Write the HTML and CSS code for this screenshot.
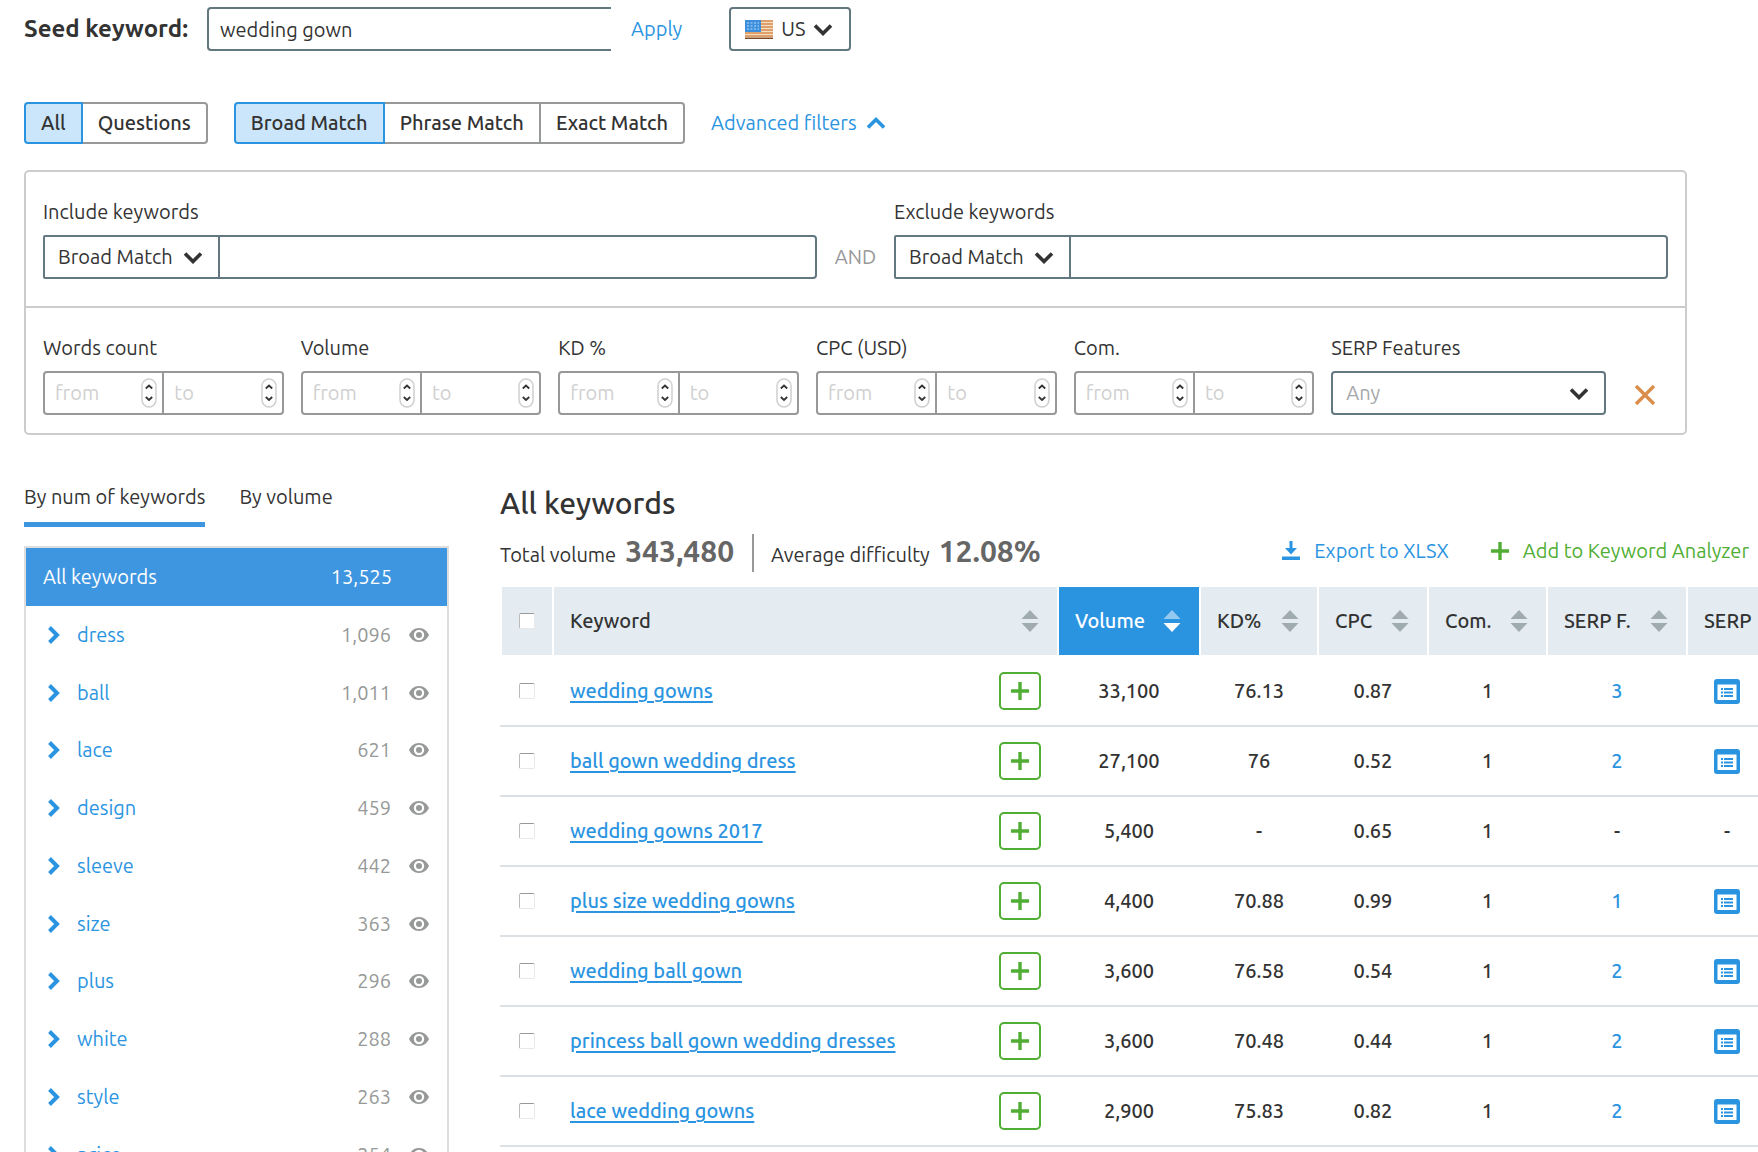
FILE: index.html
```html
<!DOCTYPE html>
<html lang="en">
<head>
<meta charset="utf-8">
<title>Keyword research</title>
<link rel="stylesheet" href="styles.css">
</head>
<body>
<svg class="sprite" aria-hidden="true">
  <symbol id="down" viewBox="0 0 20 14"><path d="M2 3.500l8 8 8-8" fill="none" stroke="currentColor" stroke-width="3.600"/></symbol>
  <symbol id="up" viewBox="0 0 20 14"><path d="M2 11.500l8-8 8 8" fill="none" stroke="currentColor" stroke-width="3.600"/></symbol>
  <symbol id="right" viewBox="0 0 12 18"><path d="M1.500 1.500L9 9l-7.500 7.500" fill="none" stroke="currentColor" stroke-width="4"/></symbol>
  <symbol id="eye" viewBox="0 0 20 14"><path fill="currentColor" fill-rule="evenodd" d="M10 0C5 0 2 3 0 7c2 4 5 7 10 7s8-3 10-7c-2-4-5-7-10-7zm0 1.800a5.200 5.200 0 1 1 0 10.400 5.200 5.200 0 0 1 0-10.400zM10 4a3 3 0 1 0 0 6 3 3 0 0 0 0-6z"/></symbol>
  <symbol id="spin" viewBox="0 0 16 30"><rect x="1" y="1" width="14" height="28" rx="7" fill="#fff" stroke="#d0d0d0" stroke-width="1.500"/><path d="M4.800 10.500L8 7.500l3.200 3M4.800 19L8 22l3.200-3" fill="none" stroke="#333" stroke-width="1.800"/></symbol>
  <symbol id="sort" viewBox="0 0 18 22"><path class="sort-up" d="M9 0l8.500 9H.5z"/><path d="M9 22l8.500-9H.5z"/></symbol>
  <symbol id="plus" viewBox="0 0 18 18"><path d="M9 0v18M0 9h18" fill="none" stroke="currentColor" stroke-width="3.400"/></symbol>
  <symbol id="cross" viewBox="0 0 22 22"><path d="M2 2l18 18M20 2L2 20" fill="none" stroke="currentColor" stroke-width="3.400"/></symbol>
  <symbol id="export" viewBox="0 0 18 20"><path fill="currentColor" d="M7.500 0h3v7H15l-6 6.500L3 7h4.500zM0 15.500h18V19H0z"/></symbol>
  <symbol id="serp" viewBox="0 0 26 25"><rect width="26" height="25" rx="3" fill="currentColor"/><path fill="#fff" d="M3.500 5.500h19V21h-19z"/><path fill="currentColor" d="M7 9h2v2H7zm3 0h9v2h-9zm-3 3.500h2v2H7zm3 0h9v2h-9zM7 16h2v2H7zm3 0h9v2h-9z"/></symbol>
</svg>

<div class="page">
  <form class="seed">
    <label class="seed-label" for="seed">Seed keyword:</label>
    <input class="seed-input" id="seed" type="text" value="wedding gown">
    <a class="apply" href="#">Apply</a>
    <div class="country">
      <svg class="flag" viewBox="0 0 28 19" aria-hidden="true">
        <rect width="28" height="19" fill="#f3dfc6"/>
        <path d="M0 1h28M0 4h28M0 7h28M0 10h28M0 13h28M0 16h28" stroke="#d98b4e" stroke-width="1.700"/>
        <path d="M0 18.300h28" stroke="#7c4a28" stroke-width="1.400"/>
        <rect width="16" height="12" fill="#3c8fdd"/>
        <path d="M2 3h12M2 6h12M2 9h12" stroke="#b9dbf8" stroke-width="1" stroke-dasharray="2 1.500"/>
      </svg>
      <select class="country-select" aria-label="Country"><option>US</option></select>
      <svg class="chevron"><use href="#down"/></svg>
    </div>
  </form>

  <div class="matches">
    <div class="group">
      <button class="seg active" type="button">All</button>
      <button class="seg" type="button">Questions</button>
    </div>
    <div class="group">
      <button class="seg active" type="button">Broad Match</button>
      <button class="seg" type="button">Phrase Match</button>
      <button class="seg" type="button">Exact Match</button>
    </div>
    <a class="advanced" href="#">Advanced filters <svg class="chevron"><use href="#up"/></svg></a>
  </div>

  <form class="filters">
    <div class="keywords-row">
      <div class="field">
        <label for="include">Include keywords</label>
        <div class="combo">
          <div class="combo-select"><select aria-label="Include match type"><option>Broad Match</option></select><svg class="chevron"><use href="#down"/></svg></div>
          <input class="combo-input" id="include" type="text">
        </div>
      </div>
      <span class="and">AND</span>
      <div class="field">
        <label for="exclude">Exclude keywords</label>
        <div class="combo">
          <div class="combo-select"><select aria-label="Exclude match type"><option>Broad Match</option></select><svg class="chevron"><use href="#down"/></svg></div>
          <input class="combo-input" id="exclude" type="text">
        </div>
      </div>
    </div>
    <div class="ranges-row">
      <div class="field"><label for="words">Words count</label>
        <div class="range"><div class="num"><input id="words" type="number" placeholder="from"><svg class="spin"><use href="#spin"/></svg></div><div class="num"><input type="number" placeholder="to" aria-label="Words count to"><svg class="spin"><use href="#spin"/></svg></div></div></div>
      <div class="field"><label for="volume">Volume</label>
        <div class="range"><div class="num"><input id="volume" type="number" placeholder="from"><svg class="spin"><use href="#spin"/></svg></div><div class="num"><input type="number" placeholder="to" aria-label="Volume to"><svg class="spin"><use href="#spin"/></svg></div></div></div>
      <div class="field"><label for="kd">KD %</label>
        <div class="range"><div class="num"><input id="kd" type="number" placeholder="from"><svg class="spin"><use href="#spin"/></svg></div><div class="num"><input type="number" placeholder="to" aria-label="KD % to"><svg class="spin"><use href="#spin"/></svg></div></div></div>
      <div class="field"><label for="cpc">CPC (USD)</label>
        <div class="range"><div class="num"><input id="cpc" type="number" placeholder="from"><svg class="spin"><use href="#spin"/></svg></div><div class="num"><input type="number" placeholder="to" aria-label="CPC to"><svg class="spin"><use href="#spin"/></svg></div></div></div>
      <div class="field"><label for="com">Com.</label>
        <div class="range"><div class="num"><input id="com" type="number" placeholder="from"><svg class="spin"><use href="#spin"/></svg></div><div class="num"><input type="number" placeholder="to" aria-label="Com. to"><svg class="spin"><use href="#spin"/></svg></div></div></div>
      <div class="field"><label for="serp-features">SERP Features</label>
        <div class="any"><select id="serp-features"><option>Any</option></select><svg class="chevron"><use href="#down"/></svg></div></div>
      <button class="clear" type="button" aria-label="Clear filters"><svg><use href="#cross"/></svg></button>
    </div>
  </form>

  <div class="columns">
    <aside class="side">
      <nav class="tabs">
        <a class="tab current" href="#">By num of keywords</a>
        <a class="tab" href="#">By volume</a>
      </nav>
      <ul class="groups">
        <li class="item all"><a href="#">All keywords</a><span class="count">13,525</span></li>
        <li class="item"><svg class="arrow"><use href="#right"/></svg><a href="#">dress</a><span class="count">1,096</span><svg class="eye"><use href="#eye"/></svg></li>
        <li class="item"><svg class="arrow"><use href="#right"/></svg><a href="#">ball</a><span class="count">1,011</span><svg class="eye"><use href="#eye"/></svg></li>
        <li class="item"><svg class="arrow"><use href="#right"/></svg><a href="#">lace</a><span class="count">621</span><svg class="eye"><use href="#eye"/></svg></li>
        <li class="item"><svg class="arrow"><use href="#right"/></svg><a href="#">design</a><span class="count">459</span><svg class="eye"><use href="#eye"/></svg></li>
        <li class="item"><svg class="arrow"><use href="#right"/></svg><a href="#">sleeve</a><span class="count">442</span><svg class="eye"><use href="#eye"/></svg></li>
        <li class="item"><svg class="arrow"><use href="#right"/></svg><a href="#">size</a><span class="count">363</span><svg class="eye"><use href="#eye"/></svg></li>
        <li class="item"><svg class="arrow"><use href="#right"/></svg><a href="#">plus</a><span class="count">296</span><svg class="eye"><use href="#eye"/></svg></li>
        <li class="item"><svg class="arrow"><use href="#right"/></svg><a href="#">white</a><span class="count">288</span><svg class="eye"><use href="#eye"/></svg></li>
        <li class="item"><svg class="arrow"><use href="#right"/></svg><a href="#">style</a><span class="count">263</span><svg class="eye"><use href="#eye"/></svg></li>
        <li class="item"><svg class="arrow"><use href="#right"/></svg><a href="#">price</a><span class="count">254</span><svg class="eye"><use href="#eye"/></svg></li>
      </ul>
    </aside>

    <main class="main">
      <h1>All keywords</h1>
      <div class="summary">
        <p class="stat">Total volume <strong>343,480</strong></p>
        <p class="stat">Average difficulty <strong>12.08%</strong></p>
        <a class="action export" href="#"><svg><use href="#export"/></svg>Export to XLSX</a>
        <a class="action add" href="#"><svg><use href="#plus"/></svg>Add to Keyword Analyzer</a>
      </div>
      <table>
        <colgroup><col class="c-check"><col><col class="c-volume"><col class="c-kd"><col class="c-cpc"><col class="c-com"><col class="c-features"><col class="c-serp"></colgroup>
        <thead>
          <tr>
            <th class="check"><input type="checkbox" aria-label="Select all"></th>
            <th><div class="head">Keyword<svg><use href="#sort"/></svg></div></th>
            <th class="sorted"><div class="head">Volume<svg><use href="#sort"/></svg></div></th>
            <th><div class="head">KD%<svg><use href="#sort"/></svg></div></th>
            <th><div class="head">CPC<svg><use href="#sort"/></svg></div></th>
            <th><div class="head">Com.<svg><use href="#sort"/></svg></div></th>
            <th><div class="head">SERP F.<svg><use href="#sort"/></svg></div></th>
            <th><div class="head">SERP</div></th>
          </tr>
        </thead>
        <tbody>
          <tr><td class="check"><input type="checkbox" aria-label="Select wedding gowns"></td><td><div class="kw"><a href="#">wedding gowns</a><button type="button" aria-label="Add"><svg><use href="#plus"/></svg></button></div></td><td>33,100</td><td>76.13</td><td>0.87</td><td>1</td><td><a href="#">3</a></td><td><svg class="serp"><use href="#serp"/></svg></td></tr>
          <tr><td class="check"><input type="checkbox" aria-label="Select ball gown wedding dress"></td><td><div class="kw"><a href="#">ball gown wedding dress</a><button type="button" aria-label="Add"><svg><use href="#plus"/></svg></button></div></td><td>27,100</td><td>76</td><td>0.52</td><td>1</td><td><a href="#">2</a></td><td><svg class="serp"><use href="#serp"/></svg></td></tr>
          <tr><td class="check"><input type="checkbox" aria-label="Select wedding gowns 2017"></td><td><div class="kw"><a href="#">wedding gowns 2017</a><button type="button" aria-label="Add"><svg><use href="#plus"/></svg></button></div></td><td>5,400</td><td>-</td><td>0.65</td><td>1</td><td>-</td><td>-</td></tr>
          <tr><td class="check"><input type="checkbox" aria-label="Select plus size wedding gowns"></td><td><div class="kw"><a href="#">plus size wedding gowns</a><button type="button" aria-label="Add"><svg><use href="#plus"/></svg></button></div></td><td>4,400</td><td>70.88</td><td>0.99</td><td>1</td><td><a href="#">1</a></td><td><svg class="serp"><use href="#serp"/></svg></td></tr>
          <tr><td class="check"><input type="checkbox" aria-label="Select wedding ball gown"></td><td><div class="kw"><a href="#">wedding ball gown</a><button type="button" aria-label="Add"><svg><use href="#plus"/></svg></button></div></td><td>3,600</td><td>76.58</td><td>0.54</td><td>1</td><td><a href="#">2</a></td><td><svg class="serp"><use href="#serp"/></svg></td></tr>
          <tr><td class="check"><input type="checkbox" aria-label="Select princess ball gown wedding dresses"></td><td><div class="kw"><a href="#">princess ball gown wedding dresses</a><button type="button" aria-label="Add"><svg><use href="#plus"/></svg></button></div></td><td>3,600</td><td>70.48</td><td>0.44</td><td>1</td><td><a href="#">2</a></td><td><svg class="serp"><use href="#serp"/></svg></td></tr>
          <tr><td class="check"><input type="checkbox" aria-label="Select lace wedding gowns"></td><td><div class="kw"><a href="#">lace wedding gowns</a><button type="button" aria-label="Add"><svg><use href="#plus"/></svg></button></div></td><td>2,900</td><td>75.83</td><td>0.82</td><td>1</td><td><a href="#">2</a></td><td><svg class="serp"><use href="#serp"/></svg></td></tr>
        </tbody>
      </table>
    </main>
  </div>
</div>
</body>
</html>
```

FILE: styles.css
```css
* { box-sizing: border-box; }

body {
  margin: 0;
  background: #fff;
  color: #333;
  font: 20px/26px Ubuntu, "Noto Sans", sans-serif;
}

.sprite { display: none; }
svg { display: block; flex: none; }
a { color: #2b94e1; text-decoration: none; }
input, select, button { font: inherit; color: inherit; background: none; border: 0; border-radius: 0; margin: 0; padding: 0; outline: 0; }
select { appearance: none; }
button { cursor: pointer; }

.page { height: 100vh; overflow: hidden; padding: 7px 0 0 24px; }
.chevron { width: 20px; height: 14px; pointer-events: none; }

/* Seed keyword */
.seed { display: flex; align-items: center; }
.seed-label { width: 183px; font-size: 24px; font-weight: 700; white-space: nowrap; }
.seed-input { width: 404px; height: 44px; padding: 0 11px; border: 2px solid #637780; border-right: 0; border-radius: 4px 0 0 4px; }
.apply { margin: 0 47px 0 20px; }
.country { display: flex; align-items: center; height: 44px; padding: 0 16px 0 14px; border: 2px solid #637780; border-radius: 4px; }
.flag { width: 28px; height: 19px; margin-right: 8px; }
.country-select { width: 32px; }

/* Match type */
.matches { display: flex; align-items: center; gap: 26px; margin: 51px 0 26px; }
.group { display: flex; }
.seg { height: 42px; padding: 0 15px; border: 2px solid #969998; font-weight: 500; white-space: nowrap; }
.seg + .seg { border-left-width: 0; }
.seg:first-child { border-radius: 4px 0 0 4px; }
.seg:last-child { border-radius: 0 4px 4px 0; }
.seg.active { background: #cbe6fa; border-color: #2b94e1; }
.advanced { display: flex; align-items: center; gap: 9px; }

/* Filters */
.filters { margin-right: 71px; border: 2px solid #ccc; border-radius: 5px; }
.field { display: flex; flex-direction: column; gap: 10px; min-width: 0; }
.keywords-row { display: grid; grid-template-columns: 1fr 77px 1fr; padding: 27px 17px; border-bottom: 2px solid #ccc; }
.and { align-self: end; line-height: 44px; text-align: center; color: #999; }
.combo { display: flex; height: 44px; }
.combo-select, .any { display: grid; align-items: center; border: 2px solid #637780; }
.combo-select { width: 177px; border-radius: 2px 0 0 2px; }
.combo-select select, .any select { grid-area: 1 / 1; height: 40px; padding-left: 13px; }
.combo-select .chevron, .any .chevron { grid-area: 1 / 1; justify-self: end; margin-right: 15px; }
.combo-input { flex: 1; min-width: 0; border: 2px solid #637780; border-left: 0; border-radius: 0 4px 4px 0; }

.ranges-row { display: grid; grid-template-columns: repeat(5, 241fr) 275fr 62px; column-gap: 17px; align-items: end; padding: 27px 0 18px 17px; }
.range { display: flex; height: 44px; border: 2px solid #969998; border-radius: 4px; }
.num { display: flex; flex: 1; min-width: 0; align-items: center; padding: 0 5px 0 10px; }
.num + .num { border-left: 2px solid #969998; }
.num input { flex: 1; width: 0; min-width: 0; appearance: textfield; }
.num input::placeholder { color: #d0d0d0; opacity: 1; }
.num input::-webkit-inner-spin-button { display: none; }
.spin { width: 16px; height: 30px; }
.any { height: 44px; border-radius: 4px; color: #a5a8aa; }
.any .chevron { color: #333; }
.clear { height: 40px; padding-left: 11px; color: #d98f4b; }
.clear svg { width: 22px; height: 22px; }

/* Lower columns */
.columns { display: grid; grid-template-columns: 425px minmax(0, 1fr); column-gap: 51px; margin-top: 49px; }
.tabs { display: flex; gap: 34px; margin-bottom: 19px; }
.tab { height: 43px; color: #333; }
.tab.current { border-bottom: 5px solid #3f96e0; }
.groups { margin: 0; padding: 0; list-style: none; border: 2px solid #ddd; }
.item { display: flex; align-items: center; height: 58px; padding: 0 18px 0 22px; }
.item:nth-child(4n + 3) { height: 57px; }
.arrow { width: 12px; height: 18px; margin-right: 17px; color: #2b94e1; }
.count { margin-left: auto; color: #969998; }
.eye { width: 20px; height: 14px; margin-left: 18px; color: #969998; }
.item.all { padding: 0 55px 0 17px; background: #3f96e0; }
.item.all a, .item.all .count { color: #fff; }

h1 { margin: 0 0 14px; font-size: 30px; line-height: 38px; font-weight: 500; }
.summary { display: flex; align-items: center; height: 34px; margin-bottom: 17px; padding-right: 9px; white-space: nowrap; }
.stat { display: flex; align-items: baseline; gap: 9px; margin: 0; line-height: 34px; }
.stat strong { font-size: 30px; color: #666; }
.stat + .stat { margin-left: 18px; padding-left: 17px; border-left: 2px solid #969998; }
.action { display: flex; align-items: center; gap: 14px; padding-bottom: 4px; }
.action svg { width: 18px; height: 20px; }
.export { margin-left: auto; }
.add { margin-left: 42px; color: #4fae33; }

/* Keyword table */
table { width: calc(100% + 8px); border-collapse: separate; border-spacing: 0; table-layout: fixed; }
.c-check { width: 54px; }
.c-volume { width: 142px; }
.c-kd { width: 118px; }
.c-cpc { width: 110px; }
.c-com { width: 119px; }
.c-features { width: 140px; }
.c-serp { width: 78px; }
th { height: 70px; padding: 0 18px 0 16px; background: #e4ecf2; background-clip: padding-box; border: solid #fff; border-width: 0 2px 2px 0; font-weight: 500; text-align: left; }
th.check { border-left-width: 2px; }
th:last-child { padding-right: 0; }
th.sorted { background-color: #2b94e1; color: #fff; --up-opacity: 0.5; }
.head { display: flex; align-items: center; justify-content: space-between; white-space: nowrap; }
.head svg { width: 18px; height: 22px; fill: #a0abb0; }
.sorted .head svg { fill: #fff; }
.sort-up { opacity: var(--up-opacity, 1); }
td { height: 70px; padding: 0 2px 0 0; border-bottom: 2px solid #dce1e5; font-weight: 500; text-align: center; }
td:last-child { padding-right: 0; }
th.check, td.check { padding: 0; }
.check input { appearance: none; display: block; width: 16px; height: 16px; margin: 0 auto; background: #fff; border: 1px solid #e8e8e8; border-top-color: #999; border-left-color: #bbb; border-radius: 2px; }
.kw { display: flex; align-items: center; justify-content: space-between; padding: 0 16px 0 16px; }
.kw a { text-decoration: underline; text-underline-offset: 3px; }
.kw button { display: grid; place-items: center; width: 42px; height: 38px; border: 2px solid #4fae33; border-radius: 5px; color: #4fae33; }
.kw svg { width: 18px; height: 18px; }
.serp { width: 26px; height: 25px; margin: 0 auto; color: #2b94e1; }
```
